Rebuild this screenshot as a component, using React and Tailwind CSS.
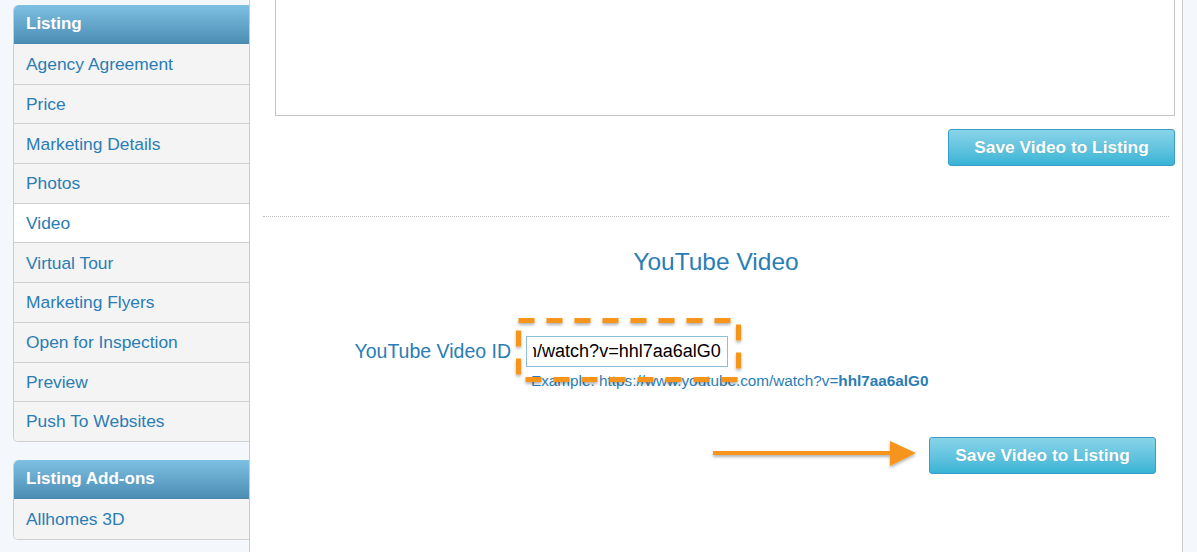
import React, { useEffect, useRef } from "react";

const items = [
  "Agency Agreement",
  "Price",
  "Marketing Details",
  "Photos",
  "Video",
  "Virtual Tour",
  "Marketing Flyers",
  "Open for Inspection",
  "Preview",
  "Push To Websites",
];

function SaveButton() {
  return (
    <button className="w-[227px] h-[37px] rounded-[3px] border border-[#3b9ccb] bg-gradient-to-b from-[#88d4e9] to-[#36b4d5] text-white font-bold text-[17.3px] [text-shadow:0_0_1px_rgba(0,0,0,0.15)]">
      Save Video to Listing
    </button>
  );
}

function Header({ children }) {
  return (
    <div className="h-[39px] pl-[12px] flex items-center rounded-tl-[5px] bg-gradient-to-b from-[#7ec0e3] to-[#4c8db4] text-white font-bold text-[17px] border-b border-[#4a88ad]">
      {children}
    </div>
  );
}

function VideoInput() {
  const ref = useRef(null);
  useEffect(() => {
    if (ref.current) ref.current.scrollLeft = 10000;
  }, []);
  return (
    <input
      ref={ref}
      readOnly
      value="https://www.youtube.com/watch?v=hhl7aa6alG0"
      className="ml-[15px] w-[202px] h-[31px] border border-[#8fbedd] bg-white px-[6px] text-[18px] text-black outline-none"
      style={{ fontFamily: '"Liberation Sans", Arial, sans-serif' }}
    />
  );
}

export default function App() {
  return (
    <div
      className="relative w-[1197px] h-[552px] overflow-hidden bg-[#f4f8fc] flex"
      style={{ fontFamily: '"Liberation Sans", Arial, sans-serif' }}
    >
      {/* Sidebar */}
      <div className="ml-[13px] w-[236px] pt-[5px] flex flex-col">
        <div className="border-l border-b border-[#cfcfcf] rounded-l-[5px] overflow-hidden">
          <Header>Listing</Header>
          {items.map((t, i) => (
            <div
              key={t}
              className={
                "h-[39.7px] pl-[12px] flex items-center text-[17.4px] text-[#2a7db5] " +
                (i > 0 ? "border-t border-[#cfcfcf] " : "") +
                (t === "Video" ? "bg-white" : "bg-[#f4f4f4]")
              }
            >
              {t}
            </div>
          ))}
        </div>
        <div className="mt-[18px] border-l border-b border-[#cfcfcf] rounded-l-[5px] overflow-hidden">
          <Header>Listing Add-ons</Header>
          <div className="h-[40px] pl-[12px] flex items-center text-[17.4px] text-[#2a7db5] bg-[#f4f4f4]">
            Allhomes 3D
          </div>
        </div>
      </div>

      {/* Main panel */}
      <div className="w-[934px] bg-white border-x border-[#cccccc] flex flex-col">
        <div className="pl-[25px] pr-[7px]">
          <div className="h-[116px] border-x border-b border-[#c4c4c4] bg-white" />
          <div className="flex justify-end mt-[13px]">
            <SaveButton />
          </div>
        </div>

        <div className="mt-[50px] mx-[13px] border-t border-dotted border-[#bdbdbd]" />

        <div className="mt-[31px] text-center text-[24.5px] leading-[28px] text-[#2a7db5]">
          YouTube Video
        </div>

        <div className="mt-[60px] flex items-center">
          <div className="w-[261px] text-right text-[19.5px] text-[#2a7db5] whitespace-nowrap">
            YouTube Video ID
          </div>
          <VideoInput />
        </div>
        <div className="mt-[5px] pl-[281px] text-[15.3px] leading-[18px] text-[#2a7db5] whitespace-nowrap">
          Example: https://www.youtube.com/watch?v=<b>hhl7aa6alG0</b>
        </div>

        <div className="mt-[47px] flex justify-end pr-[26px]">
          <SaveButton />
        </div>
      </div>

      {/* Annotations */}
      <svg
        className="absolute left-0 top-0 pointer-events-none"
        width="1197"
        height="552"
        viewBox="0 0 1197 552"
      >
        <defs>
          <filter id="sh" x="-10%" y="-10%" width="120%" height="130%">
            <feDropShadow dx="0" dy="2" stdDeviation="1.5" floodColor="#000" floodOpacity="0.3" />
          </filter>
        </defs>
        <g filter="url(#sh)">
          <rect
            x="518.5"
            y="320.5"
            width="220"
            height="59"
            fill="none"
            stroke="#f7941d"
            strokeWidth="5"
            strokeDasharray="16 12"
          />
          <line x1="713" y1="453" x2="895" y2="453" stroke="#f7941d" strokeWidth="4" />
          <polygon points="890,441 916,453 890,466" fill="#f7941d" />
        </g>
      </svg>
    </div>
  );
}
